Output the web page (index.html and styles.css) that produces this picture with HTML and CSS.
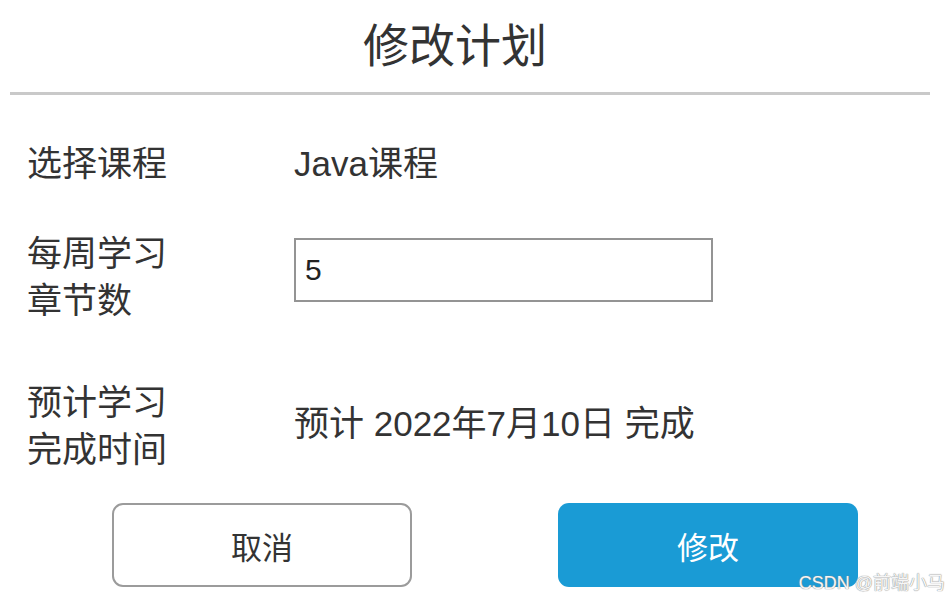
FILE: index.html
```html
<!DOCTYPE html>
<html lang="zh-CN">
<head>
  <meta charset="UTF-8" />
  <meta name="viewport" content="width=device-width, initial-scale=1.0" />
  <title>修改计划</title>
  <link rel="stylesheet" href="styles.css">
</head>
<body>
  <div class="dialog">
    <h1 class="title">修改计划</h1>
    <div class="divider"></div>

    <div class="form">
      <div class="row row-course">
        <div class="label">选择课程</div>
        <div class="value">Java课程</div>
      </div>

      <div class="row row-count">
        <div class="label">每周学习<br>章节数</div>
        <input class="count-input" type="text" value="5" />
      </div>

      <div class="row row-finish">
        <div class="label">预计学习<br>完成时间</div>
        <div class="value value-date">预计 2022年7月10日 完成</div>
      </div>
    </div>

    <div class="actions">
      <button class="btn btn-cancel">取消</button>
      <button class="btn btn-submit">修改</button>
    </div>
  </div>

  <span class="watermark">CSDN @前端小马</span>
</body>
</html>
```

FILE: styles.css
```css
body {
  margin: 0;
  background: #fff;
  color: #333;
  font-family: 'Liberation Sans', 'Noto Sans CJK SC', sans-serif;
  height: 602px;
  overflow: hidden;
  position: relative;
}

.dialog {
  padding-top: 18px;
}

.title {
  margin: 0;
  text-align: center;
  font-size: 46px;
  font-weight: normal;
  line-height: 56px;
  color: #333;
  padding-right: 41px;
}

.divider {
  margin: 18px 21px 0 10px;
  height: 3px;
  background: #c9c9c9;
}

.form {
  padding: 45px 0 0 27px;
}

.row {
  display: flex;
  align-items: center;
}

.label {
  width: 267px;
  flex-shrink: 0;
  font-size: 35px;
  line-height: 47px;
  color: #333;
}

.value {
  font-size: 35px;
  line-height: 47px;
  color: #333;
}

.row-count {
  margin-top: 43px;
  align-items: flex-start;
}

.count-input {
  margin-top: 8px;
  width: 419px;
  height: 64px;
  box-sizing: border-box;
  border: 2px solid #949494;
  padding: 0 9px;
  font-family: 'Liberation Sans', sans-serif;
  font-size: 30px;
  color: #222;
  outline: none;
}

.row-finish {
  margin-top: 55px;
}

.value-date {
  margin-top: -5px;
}

.actions {
  display: flex;
  gap: 146px;
  padding: 30px 0 0 112px;
}

.btn {
  width: 300px;
  height: 84px;
  box-sizing: border-box;
  border-radius: 11px;
  font-family: 'Noto Sans CJK SC', sans-serif;
  font-size: 31px;
  cursor: pointer;
}

.btn-cancel {
  background: #fff;
  border: 2px solid #9b9b9b;
  color: #333;
}

.btn-submit {
  background: #1a9bd5;
  border: none;
  color: #fff;
}

.watermark {
  position: absolute;
  right: 6px;
  bottom: 8px;
  font-size: 18px;
  color: #f6f6f6;
  text-shadow: 0 0 1px #888, 0 0 1px #999;
}
```
